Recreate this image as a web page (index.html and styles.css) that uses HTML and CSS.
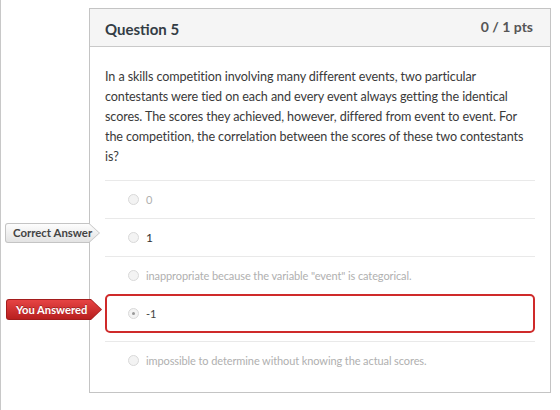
FILE: index.html
```html
<!DOCTYPE html>
<html lang="en">
<head>
    <meta charset="UTF-8">
    <meta name="viewport" content="width=device-width, initial-scale=1.0">
    <title>Question 5</title>
    <link rel="stylesheet" href="styles.css">
</head>
<body>
    <div class="page">
        <div class="question">
            <div class="q-header">
                <span class="q-name">Question 5</span>
                <span class="q-pts">0 / 1 pts</span>
            </div>
            <div class="q-body">
                <p class="q-text">In a skills competition involving many different events, two particular contestants were tied on each and every event always getting the identical scores. The scores they achieved, however, differed from event to event. For the competition, the correlation between the scores of these two contestants is?</p>

                <div class="answers">
                    <div class="answer dim"><span class="radio"></span>0</div>
                    <div class="answer correct">
                        <span class="tag tag-correct">Correct Answer</span>
                        <span class="radio"></span>1
                    </div>
                    <div class="answer dim"><span class="radio"></span>inappropriate because the variable "event" is categorical.</div>
                    <div class="answer wrong">
                        <span class="tag tag-wrong">You Answered</span>
                        <span class="radio checked"></span>-1
                    </div>
                    <div class="answer dim"><span class="radio"></span>impossible to determine without knowing the actual scores.</div>
                </div>
            </div>
        </div>
    </div>
</body>
</html>
```

FILE: styles.css
```css
body {
    margin: 0;
    font-family: Lato, "Open Sans", sans-serif;
    background-color: #fff;
    color: #333;
}
.page {
    border-left: 1px solid #c8c8c8;
    min-height: 410px;
    box-sizing: border-box;
    padding: 8px 9px 0 88px;
}
.question {
    border: 1px solid #c4c4c4;
    background-color: #fff;
}
.q-header {
    display: flex;
    justify-content: space-between;
    align-items: center;
    height: 37px;
    padding: 0 17px 0 15px;
    background-color: #f5f5f5;
    border-bottom: 1px solid #c9c9c9;
    font-weight: bold;
}
.q-name {
    font-size: 15px;
    color: #333d45;
    margin-top: 3px;
}
.q-pts {
    font-size: 14px;
    color: #555;
    margin-top: -2px;
}
.q-body {
    padding: 20px 15px 13px 15px;
}
.q-text {
    margin: 0 7px 13px 0;
    font-size: 12.6px;
    letter-spacing: -0.1px;
    line-height: 20px;
    color: #3a3a3a;
}
.answer {
    position: relative;
    display: flex;
    align-items: center;
    box-sizing: border-box;
    height: 38px;
    padding-left: 23px;
    border-top: 1px solid #e9e9e9;
    font-size: 11px;
    letter-spacing: -0.1px;
    color: #333;
}
.answer.correct {
    font-size: 12px;
}
.answer.dim {
    color: #b0b0b0;
}
.answer.wrong {
    height: 39px;
    padding-left: 21px;
    border: 2px solid #cf2a2a;
    border-radius: 5px;
    margin-bottom: 8px;
    color: #444;
}
.radio {
    display: inline-block;
    width: 9px;
    height: 9px;
    margin-right: 7px;
    border: 1px solid #d9d9d9;
    border-radius: 50%;
    background-color: #f3f3f3;
    box-sizing: content-box;
    position: relative;
}
.radio.checked::after {
    content: "";
    position: absolute;
    left: 3px;
    top: 3px;
    width: 3px;
    height: 3px;
    border-radius: 50%;
    background-color: #999;
}

/* answer flags on the left of the card */
.tag {
    position: absolute;
    height: 20px;
    line-height: 20px;
    font-size: 11.4px;
    font-weight: bold;
    letter-spacing: 0;
    padding-left: 8px;
    box-sizing: border-box;
    clip-path: polygon(0 0, calc(100% - 11px) 0, 100% 50%, calc(100% - 11px) 100%, 0 100%);
    border-radius: 3px 0 0 3px;
    z-index: 1;
}
.tag::before {
    content: "";
    position: absolute;
    left: 1px;
    top: 1px;
    right: 1px;
    bottom: 1px;
    clip-path: polygon(0 0, calc(100% - 10px) 0, 100% 50%, calc(100% - 10px) 100%, 0 100%);
    border-radius: 2px 0 0 2px;
    z-index: -1;
}
.tag-correct {
    left: -100px;
    top: 4px;
    width: 95px;
    color: #444;
    background-color: #c4c4c4;
}
.tag-correct::before {
    background: linear-gradient(#fdfdfd, #e3e3e3);
}
.tag-wrong {
    left: -101px;
    top: 3px;
    width: 96px;
    height: 21px;
    line-height: 21px;
    padding-left: 10px;
    font-size: 11.2px;
    color: #fff;
    background-color: #a31c1c;
    text-shadow: 0 -1px 0 rgba(0, 0, 0, 0.3);
}
.tag-wrong::before {
    background: linear-gradient(#e64444, #b81f1f);
}
```
